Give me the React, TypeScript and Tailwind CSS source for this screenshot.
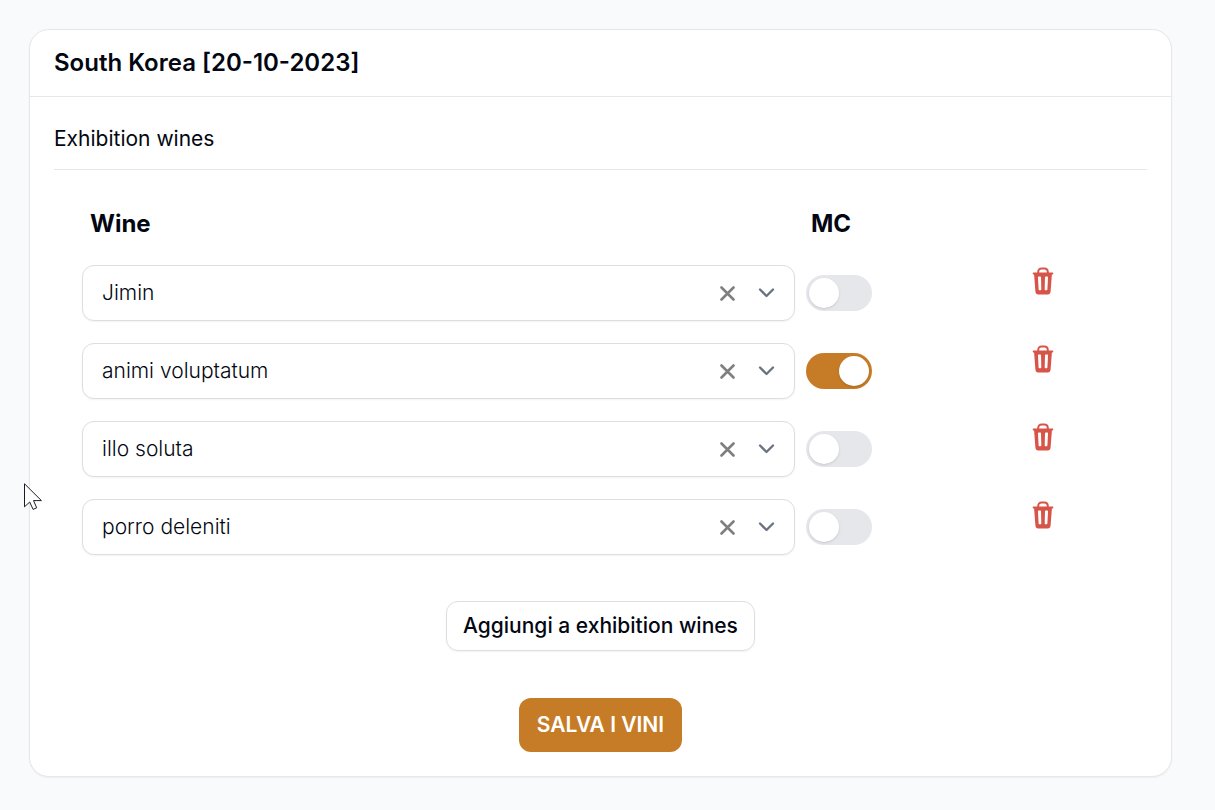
import { useState } from 'react';
import type { ReactNode } from 'react';

interface WineRow {
  id: number;
  wine: string;
  mc: boolean;
}

const initialRows: WineRow[] = [
  { id: 1, wine: 'Jimin', mc: false },
  { id: 2, wine: 'animi voluptatum', mc: true },
  { id: 3, wine: 'illo soluta', mc: false },
  { id: 4, wine: 'porro deleniti', mc: false },
];

const wines = initialRows.map(r => r.wine);

function TrashIcon() {
  return (
    <svg width="22" height="28" viewBox="0 0 22 28" fill="none" aria-hidden="true">
      <path d="M6.2 6.5V5c0-2.3 1.4-3.6 3.4-3.6h2.8c2 0 3.4 1.3 3.4 3.6v1.5" stroke="#d75548" strokeWidth="2" />
      <path
        fillRule="evenodd"
        fill="#d75548"
        d="M1.4 5.4h19.2c.9 0 .9 2 0 2h-.7l-1.3 17.2c-.2 2-1.2 2.9-2.8 2.9H6.2c-1.6 0-2.6-.9-2.8-2.9L2.1 7.4h-.7c-.9 0-.9-2 0-2ZM7 9.6c-.7 0-1 .4-1 1l.6 11.6c0 .7.4 1.1 1 1.1h.7c.6 0 1-.4 1-1.1L9 10.6c0-.6-.4-1-1-1Zm7 0c-.6 0-1 .4-1 1l-.3 11.6c0 .7.4 1.1 1 1.1h.7c.6 0 1-.4 1-1.1l.6-11.6c0-.6-.3-1-1-1Z"
      />
    </svg>
  );
}

function Cursor() {
  return (
    <svg className="fixed left-6 top-[483px] pointer-events-none" width="19" height="28" viewBox="0 0 19 28" aria-hidden="true">
      <path d="M.5.8v23l5.2-4.8 3.4 7.4 3.6-1.6-3.2-7.2h7.9Z" fill="#fff" stroke="#1a1a2a" />
    </svg>
  );
}

function Toggle({ label, checked, onChange }: { label: string; checked: boolean; onChange: () => void }) {
  return (
    <input
      type="checkbox"
      role="switch"
      aria-label={label}
      checked={checked}
      onChange={onChange}
      className="block appearance-none w-[66px] h-9 p-[3px] rounded-full cursor-pointer bg-gray-200 checked:bg-[#c67c26] transition-colors
        before:block before:size-[30px] before:rounded-full before:bg-white before:shadow-sm before:transition-transform checked:before:translate-x-[30px]"
    />
  );
}

function Th({ children }: { children?: ReactNode }) {
  return <th className="px-2 pb-[23px] text-left text-2xl leading-9 font-bold">{children}</th>;
}

export default function App() {
  const [rows, setRows] = useState(initialRows);

  const update = (id: number, patch: Partial<WineRow>) =>
    setRows(rows.map(r => (r.id === id ? { ...r, ...patch } : r)));

  return (
    <main className="min-h-screen bg-gray-50 pt-[29px] pb-8 pl-[29px] pr-[43px] text-gray-950 font-[Inter,sans-serif]">
      <section className="bg-white border border-gray-200 rounded-[20px] shadow-xs">
        <header className="px-6 py-[15px] border-b border-gray-200">
          <h1 className="text-2xl leading-9 font-semibold">South Korea [20-10-2023]</h1>
        </header>

        <form className="px-6 py-6" onSubmit={e => e.preventDefault()}>
          <h2 className="pb-3 border-b border-gray-200 text-[21px] leading-9">Exhibition wines</h2>

          <div className="px-7 pt-9">
            <table className="w-full table-fixed">
              <colgroup>
                <col />
                <col className="w-[164px]" />
                <col className="w-[152px]" />
              </colgroup>
              <thead>
                <tr>
                  <Th>Wine</Th>
                  <Th>MC</Th>
                  <td />
                </tr>
              </thead>
              <tbody>
                {rows.map(row => (
                  <tr key={row.id}>
                    <td className="pr-2 pb-[22px]">
                      <div className="relative">
                        <select
                          aria-label="Wine"
                          value={row.wine}
                          onChange={e => update(row.id, { wine: e.target.value })}
                          className="block w-full h-14 appearance-none bg-white border border-[#dedede] rounded-xl shadow-xs pl-[19px] pr-24 text-[21px] font-light"
                        >
                          <option value="" />
                          {wines.map(w => (
                            <option key={w} value={w}>{w}</option>
                          ))}
                        </select>
                        <button
                          type="button"
                          aria-label="Clear"
                          onClick={() => update(row.id, { wine: '' })}
                          className="absolute inset-y-0 right-[60px] flex items-center text-[#7f7f7f]"
                        >
                          <svg width="15" height="15" viewBox="0 0 15 15" fill="none" stroke="currentColor" strokeWidth="2.6" strokeLinecap="round">
                            <path d="M1.5 1.5l12 12M13.5 1.5l-12 12" />
                          </svg>
                        </button>
                        <span className="absolute inset-y-0 right-5 flex items-center text-gray-500 pointer-events-none">
                          <svg width="17" height="10" viewBox="0 0 17 10" fill="none" stroke="currentColor" strokeWidth="2.3" strokeLinecap="round" strokeLinejoin="round">
                            <path d="M2 1.5l6.5 6.5L15 1.5" />
                          </svg>
                        </span>
                      </div>
                    </td>
                    <td className="pl-[3px] pb-[22px]">
                      <Toggle label="MC" checked={row.mc} onChange={() => update(row.id, { mc: !row.mc })} />
                    </td>
                    <td className="align-top pt-[2px]">
                      <button
                        type="button"
                        aria-label="Delete"
                        onClick={() => setRows(rows.filter(r => r.id !== row.id))}
                        className="block mx-auto cursor-pointer"
                      >
                        <TrashIcon />
                      </button>
                    </td>
                  </tr>
                ))}
              </tbody>
            </table>
          </div>

          <div className="flex flex-col items-center gap-[47px] pt-6">
            <button
              type="button"
              onClick={() => setRows([...rows, { id: Date.now(), wine: '', mc: false }])}
              className="h-[50px] px-4 border border-[#dedede] rounded-xl shadow-xs text-[21px] font-medium cursor-pointer"
            >
              Aggiungi a exhibition wines
            </button>
            <button type="submit" className="h-[54px] px-[18px] rounded-xl bg-[#c67c26] text-white text-[21px] font-semibold cursor-pointer">
              SALVA I VINI
            </button>
          </div>
        </form>
      </section>
      <Cursor />
    </main>
  );
}
